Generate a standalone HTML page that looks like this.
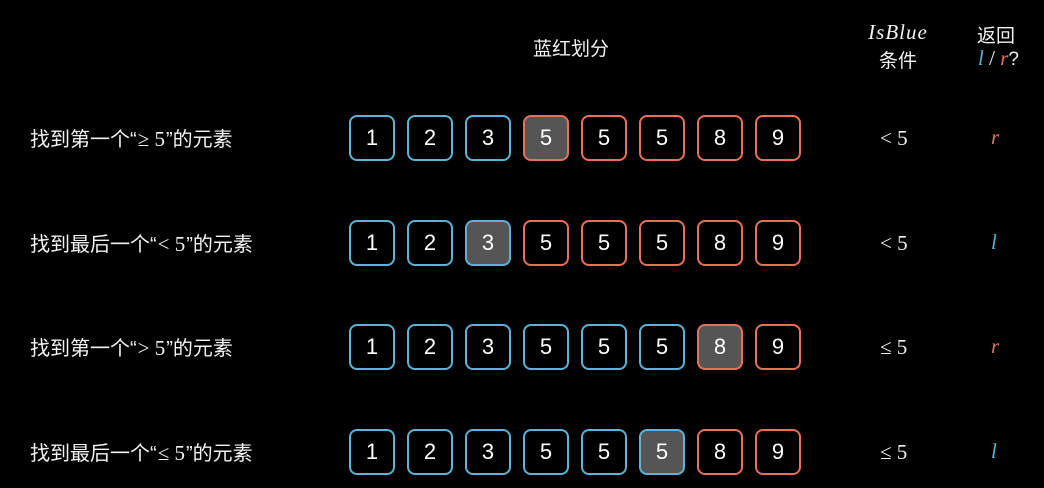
<!DOCTYPE html>
<html><head><meta charset="utf-8"><style>
body{margin:0;width:1044px;height:488px;background:#000;position:relative;overflow:hidden;color:#f2f2f2;font-family:"Liberation Sans","Noto Sans CJK SC",sans-serif}
.a{position:absolute;white-space:nowrap}
.lbl{left:30px;font-size:20px;line-height:24px}
.lbl .s{font-family:"Liberation Serif","DejaVu Serif",serif;font-size:21px;padding:0 1px}
.b{position:absolute;width:42px;height:42px;border:2.5px solid;border-radius:8px;box-sizing:content-box;text-align:center;line-height:42px;font-size:22px;color:#fff}
.bl{border-color:#5db3d5}.rd{border-color:#e8705a}.g{background:#555}
.m{font-family:"Liberation Serif","DejaVu Serif",serif;font-size:21px}
.c{text-align:center}
</style></head><body>
<div class="a" style="left:533px;top:34px;font-size:19px">蓝红划分</div>
<div class="a m c" style="left:858px;top:20px;width:80px;font-style:italic;letter-spacing:1px">IsBlue</div>
<div class="a c" style="left:858px;top:46px;width:80px;font-size:19px">条件</div>
<div class="a" style="left:977px;top:21px;font-size:19px">返回</div>
<div class="a" style="left:978px;top:46px;font-size:19px"><span class="m" style="font-style:italic;color:#5db3d5">l</span><span class="m"> / </span><span class="m" style="font-style:italic;color:#e8705a">r</span>?</div>

<div class="a lbl" style="top:127px">找到第一个“<span class="s">≥ 5</span>”的元素</div>
<div class="a lbl" style="top:232px">找到最后一个“<span class="s">&lt; 5</span>”的元素</div>
<div class="a lbl" style="top:336px">找到第一个“<span class="s">&gt; 5</span>”的元素</div>
<div class="a lbl" style="top:441px">找到最后一个“<span class="s">≤ 5</span>”的元素</div>

<div class="a m" style="left:880px;top:126px">&lt;&nbsp;5</div>
<div class="a m" style="left:880px;top:231px">&lt;&nbsp;5</div>
<div class="a m" style="left:880px;top:335px">≤&nbsp;5</div>
<div class="a m" style="left:880px;top:440px">≤&nbsp;5</div>
<div class="a m" style="left:991px;top:125px;font-style:italic;color:#e8705a">r</div>
<div class="a m" style="left:991px;top:230px;font-style:italic;color:#5db3d5">l</div>
<div class="a m" style="left:991px;top:334px;font-style:italic;color:#e8705a">r</div>
<div class="a m" style="left:991px;top:439px;font-style:italic;color:#5db3d5">l</div>

<div id="boxes"></div>
<script>
var rows=[[115,3,3],[220,3,2],[324,6,6],[429,6,5]],vals=[1,2,3,5,5,5,8,9],h='';
rows.forEach(function(r){for(var i=0;i<8;i++){h+='<div class="b '+(i<r[1]?'bl':'rd')+(i==r[2]?' g':'')+'" style="left:'+(349+58*i)+'px;top:'+r[0]+'px">'+vals[i]+'</div>';}});
document.getElementById('boxes').innerHTML=h;
</script>
</body></html>
